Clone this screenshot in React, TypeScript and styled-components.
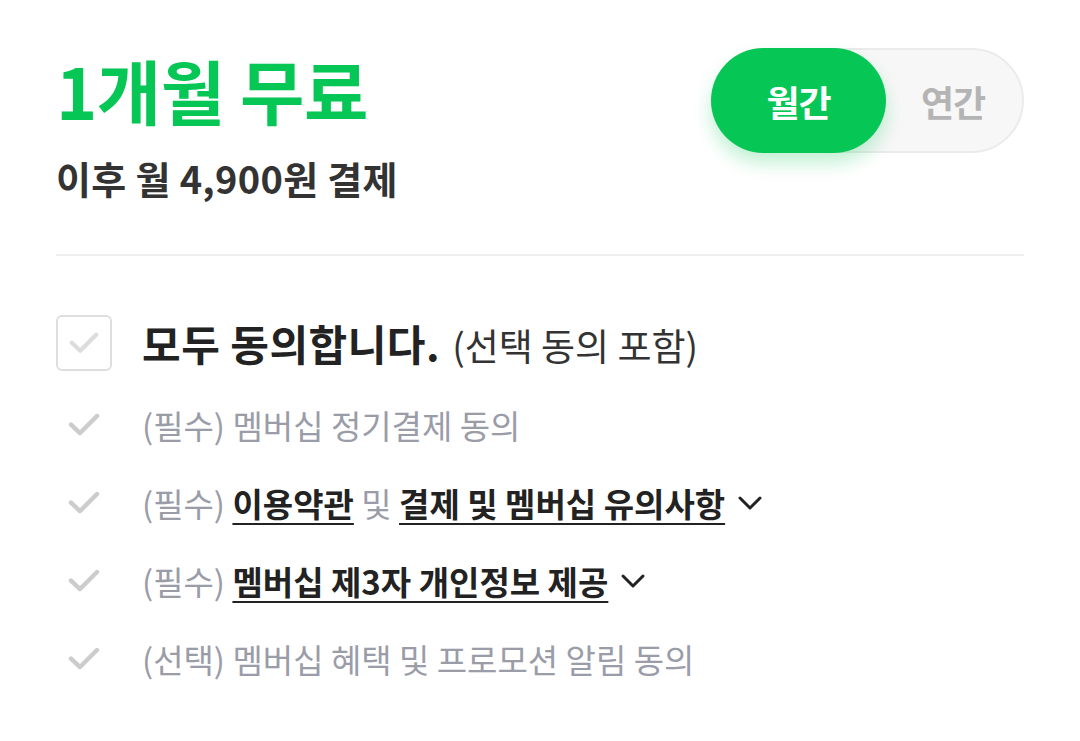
import React, { useState } from "react";
import styled, { createGlobalStyle } from "styled-components";

const GlobalStyle = createGlobalStyle`
  body {
    margin: 0;
    background: #ffffff;
    font-family: "Noto Sans CJK KR", "Noto Sans", sans-serif;
  }
`;

const GREEN = "#06c755";

const Page = styled.div`
  padding: 48px 56px 0 56px;
`;

const Header = styled.div`
  display: flex;
  justify-content: space-between;
  align-items: flex-start;
  padding-bottom: 52px;
  border-bottom: 2px solid #f0f0f0;
`;

const Title = styled.h1`
  margin: 0;
  font-size: 70px;
  line-height: 84px;
  font-weight: 700;
  letter-spacing: -0.5px;
  color: ${GREEN};
`;

const Sub = styled.div`
  margin-top: 22px;
  font-size: 38px;
  line-height: 48px;
  font-weight: 600;
  letter-spacing: 0.3px;
  color: #333333;
`;

const Toggle = styled.div`
  display: flex;
  width: 313px;
  height: 105px;
  box-sizing: border-box;
  border: 2px solid #ebebeb;
  border-radius: 53px;
  background: #f7f7f7;
`;

const ToggleItem = styled.button<{ $on: boolean }>`
  border: none;
  margin: -2px 0 -2px -2px;
  height: 105px;
  width: ${(p) => (p.$on ? "175px" : "138px")};
  border-radius: 53px;
  font-family: inherit;
  font-size: 36px;
  font-weight: 700;
  letter-spacing: -1px;
  cursor: pointer;
  color: ${(p) => (p.$on ? "#ffffff" : "#b4b4b4")};
  background: ${(p) => (p.$on ? GREEN : "transparent")};
  box-shadow: ${(p) => (p.$on ? "0 10px 18px rgba(6, 199, 85, 0.25)" : "none")};
`;

const List = styled.div`
  display: flex;
  flex-direction: column;
  padding-top: 56px;
`;

const AllRow = styled.div`
  display: flex;
  align-items: center;
  gap: 30px;
  margin-bottom: 13px;
`;

const Box = styled.div`
  width: 56px;
  height: 56px;
  box-sizing: border-box;
  border: 2px solid #dedede;
  border-radius: 6px;
  display: flex;
  align-items: center;
  justify-content: center;
`;

const AllText = styled.div`
  font-size: 42px;
  font-weight: 700;
  letter-spacing: 0.5px;
  color: #222222;
  span {
    font-size: 37px;
    font-weight: 400;
    letter-spacing: 0;
    color: #333333;
    margin-left: 12px;
  }
`;

const Row = styled.div`
  display: flex;
  align-items: center;
  height: 78px;
  gap: 42px;
  padding-left: 12px;
`;

const RowText = styled.div`
  display: flex;
  align-items: center;
  font-size: 33px;
  letter-spacing: 0;
  color: #9a9ca8;
  white-space: pre;
`;

const Link = styled.a`
  color: #222222;
  font-weight: 700;
  text-decoration: underline;
  text-decoration-thickness: 2px;
  text-underline-offset: 6px;
`;

const Chevron = styled.svg`
  margin-left: 12px;
`;

const Check = ({ color, size }: { color: string; size: number }) => (
  <svg width={size} height={size * 0.72} viewBox="0 0 32 23" fill="none">
    <path d="M3 11.5 L12 20 L29 3" stroke={color} strokeWidth="4.5" strokeLinecap="round" strokeLinejoin="round" />
  </svg>
);

const Down = () => (
  <Chevron width="26" height="16" viewBox="0 0 26 16" fill="none">
    <path d="M3 3 L13 13 L23 3" stroke="#222" strokeWidth="3" strokeLinecap="round" strokeLinejoin="round" />
  </Chevron>
);

export default function App() {
  const [plan, setPlan] = useState<"month" | "year">("month");
  return (
    <Page>
      <GlobalStyle />
      <Header>
        <div>
          <Title>1개월 무료</Title>
          <Sub>이후 월 4,900원 결제</Sub>
        </div>
        <Toggle>
          <ToggleItem $on={plan === "month"} onClick={() => setPlan("month")}>월간</ToggleItem>
          <ToggleItem $on={plan === "year"} onClick={() => setPlan("year")}>연간</ToggleItem>
        </Toggle>
      </Header>
      <List>
        <AllRow>
          <Box>
            <Check color="#dcdcdc" size={30} />
          </Box>
          <AllText>
            모두 동의합니다.<span>(선택 동의 포함)</span>
          </AllText>
        </AllRow>
        <Row>
          <Check color="#cccccc" size={32} />
          <RowText>(필수) 멤버십 정기결제 동의</RowText>
        </Row>
        <Row>
          <Check color="#cccccc" size={32} />
          <RowText>
            (필수) <Link>이용약관</Link> 및 <Link>결제 및 멤버십 유의사항</Link>
            <Down />
          </RowText>
        </Row>
        <Row>
          <Check color="#cccccc" size={32} />
          <RowText>
            (필수) <Link>멤버십 제3자 개인정보 제공</Link>
            <Down />
          </RowText>
        </Row>
        <Row>
          <Check color="#cccccc" size={32} />
          <RowText>(선택) 멤버십 혜택 및 프로모션 알림 동의</RowText>
        </Row>
      </List>
    </Page>
  );
}
